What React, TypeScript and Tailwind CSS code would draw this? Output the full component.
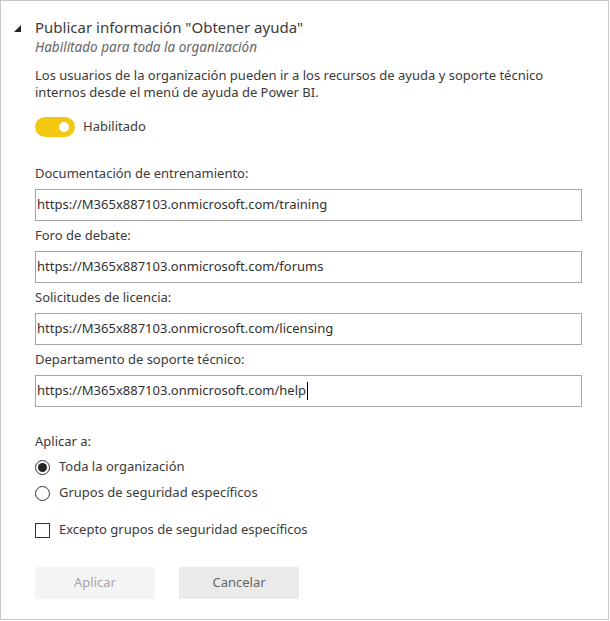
import React from "react";

const font = { fontFamily: '"Noto Sans", "Open Sans", sans-serif' };

function Field({ label, value, cursor }: { label: string; value: string; cursor?: boolean }) {
  return (
    <div className="flex flex-col">
      <div className="h-[20px] leading-[20px] text-[13px] text-[#3b3a39] mb-[6px]">{label}</div>
      <div className="h-[32px] w-[547px] border border-[#a6a6a6] flex items-center pl-[1px] text-[13px] text-[#323130] bg-white">
        <span>{value}</span>
        {cursor && <span className="inline-block w-px h-[18px] bg-black ml-[1px]" />}
      </div>
    </div>
  );
}

export default function App() {
  return (
    <div style={font} className="w-[609px] h-[620px] border border-[#c8c8c8] bg-white relative">
      <div className="pl-[34px] pt-[15px]">
        <div className="relative">
          <svg className="absolute left-[-21px] top-[9px]" width="7" height="7" viewBox="0 0 7 7">
            <polygon points="7,0 7,7 0,7" fill="#252423" />
          </svg>
          <div className="text-[15px] leading-[22px] text-[#3b3a39]">Publicar información "Obtener ayuda"</div>
          <div className="text-[13.5px] leading-[18px] italic text-[#666666]">Habilitado para toda la organización</div>
        </div>
        <div className="mt-[11px] text-[13px] leading-[17px] text-[#3b3a39] w-[560px]">
          Los usuarios de la organización pueden ir a los recursos de ayuda y soporte técnico internos desde el menú de ayuda de Power BI.
        </div>
        <div className="mt-[16px] flex items-center h-[20px]">
          <div className="w-[40px] h-[20px] rounded-full bg-[#f2c811] flex items-center justify-end pr-[6px]">
            <div className="w-[10px] h-[10px] rounded-full bg-white" />
          </div>
          <span className="ml-[8px] text-[13px] text-[#3b3a39]">Habilitado</span>
        </div>
        <div className="mt-[26px] flex flex-col gap-[4px]">
          <Field label="Documentación de entrenamiento:" value="https://M365x887103.onmicrosoft.com/training" />
          <Field label="Foro de debate:" value="https://M365x887103.onmicrosoft.com/forums" />
          <Field label="Solicitudes de licencia:" value="https://M365x887103.onmicrosoft.com/licensing" />
          <Field label="Departamento de soporte técnico:" value="https://M365x887103.onmicrosoft.com/help" cursor />
        </div>
        <div className="mt-[24px] h-[20px] leading-[20px] text-[13px] text-[#3b3a39]">Aplicar a:</div>
        <div className="mt-[6px] flex items-center h-[20px] text-[13px] text-[#3b3a39]">
          <div className="w-[15px] h-[15px] rounded-full border border-[#333333] flex items-center justify-center">
            <div className="w-[9px] h-[9px] rounded-full bg-[#252423]" />
          </div>
          <span className="ml-[9px]">Toda la organización</span>
        </div>
        <div className="mt-[6px] flex items-center h-[20px] text-[13px] text-[#3b3a39]">
          <div className="w-[15px] h-[15px] rounded-full border border-[#333333]" />
          <span className="ml-[9px]">Grupos de seguridad específicos</span>
        </div>
        <div className="mt-[17px] flex items-center h-[20px] text-[13px] text-[#3b3a39]">
          <div className="w-[15px] h-[15px] border border-[#333333]" />
          <span className="ml-[9px]">Excepto grupos de seguridad específicos</span>
        </div>
        <div className="mt-[27px] flex gap-[24px]">
          <div className="w-[120px] h-[32px] bg-[#f4f4f4] text-[#a6a6a6] text-[13px] flex items-center justify-center">Aplicar</div>
          <div className="w-[120px] h-[32px] bg-[#eaeaea] text-[#666666] text-[13px] flex items-center justify-center">Cancelar</div>
        </div>
      </div>
    </div>
  );
}
